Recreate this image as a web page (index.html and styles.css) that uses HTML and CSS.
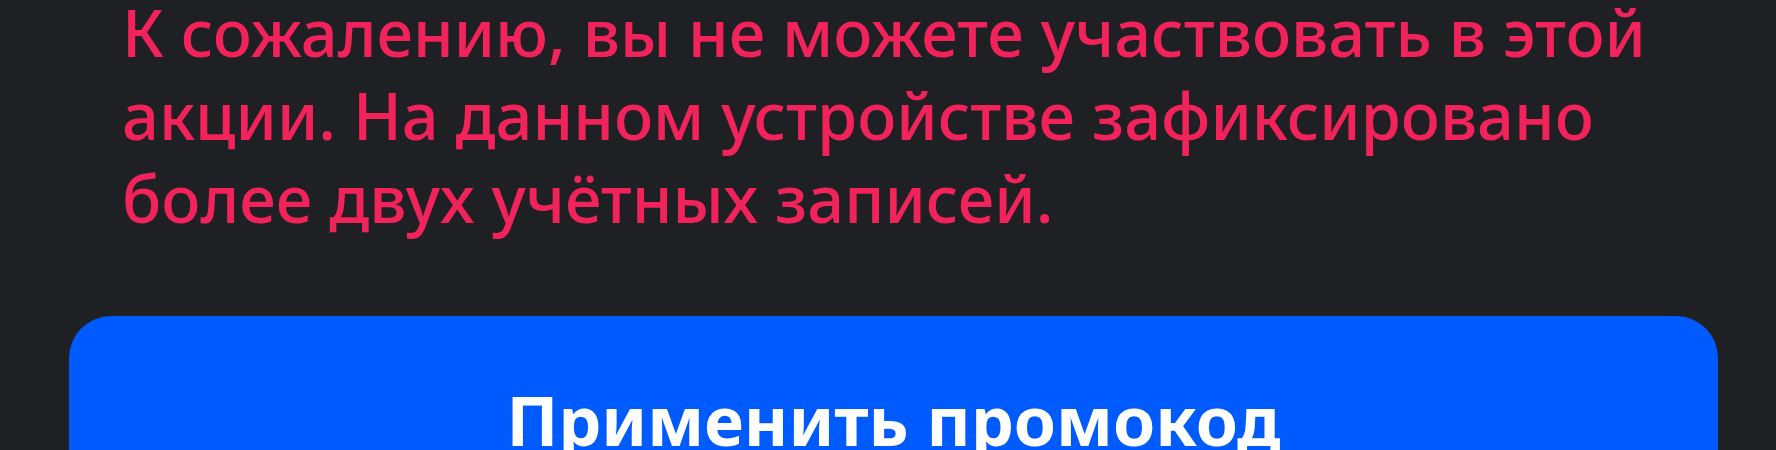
FILE: index.html
```html
<!DOCTYPE html>
<html lang="ru">
<head>
<meta charset="utf-8">
<link rel="stylesheet" href="styles.css">
</head>
<body>
<main class="screen">
  <p class="message">К сожалению, вы не можете участвовать в этой<br>акции. На данном устройстве зафиксировано<br>более двух учётных записей.</p>
  <button class="apply">Применить промокод</button>
</main>
</body>
</html>
```
FILE: styles.css
```css
html, body {
  margin: 0;
  padding: 0;
  background: #1f2023;
  height: 100%;
  overflow: hidden;
}
.screen {
  display: flex;
  flex-direction: column;
  align-items: flex-start;
}
.message {
  margin: -9px 0 0 122px;
  font-family: "Noto Sans", "Liberation Sans", sans-serif;
  font-weight: 500;
  font-size: 65px;
  line-height: 83px;
  color: #f2235b;
  white-space: nowrap;
}
.apply {
  margin: 76px 0 0 69px;
  width: 1649px;
  height: 200px;
  border: none;
  border-radius: 42px;
  background: #005bff;
  color: #ffffff;
  font-family: "Noto Sans", "Liberation Sans", sans-serif;
  font-weight: 700;
  font-size: 68px;
  line-height: 68px;
  padding: 70px 0 0 0;
  display: flex;
  justify-content: center;
  align-items: flex-start;
}
```
